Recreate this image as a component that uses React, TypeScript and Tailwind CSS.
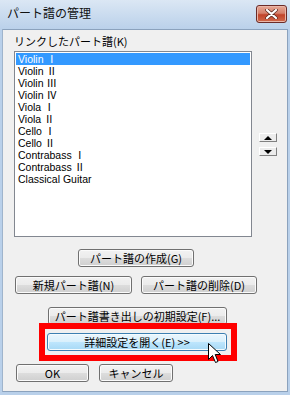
const parts = [
  'Violin Ⅰ',
  'Violin Ⅱ',
  'Violin Ⅲ',
  'Violin Ⅳ',
  'Viola Ⅰ',
  'Viola Ⅱ',
  'Cello Ⅰ',
  'Cello Ⅱ',
  'Contrabass Ⅰ',
  'Contrabass Ⅱ',
  'Classical Guitar',
];

// plain Win7 push button
const btn =
  'h-[18px] rounded-[3px] border border-[#707070] bg-[linear-gradient(#f2f2f2,#ebebeb_50%,#dddddd_50%,#cfcfcf)] shadow-[inset_0_0_0_1px_#fbfbfb] text-[11px] leading-[16px] whitespace-nowrap text-black flex items-center justify-center';

function ArrowButton({ up }: { up?: boolean }) {
  return (
    <div className="w-[18px] h-[9px] bg-[#ececec] border-t border-l border-t-white border-l-white border-b border-r border-b-[#808080] border-r-[#808080] flex items-center justify-center">
      <svg width="8" height="4" viewBox="0 0 8 4">
        {up ? <polygon points="0,4 8,4 4,0" fill="#000" /> : <polygon points="0,0 8,0 4,4" fill="#000" />}
      </svg>
    </div>
  );
}

export default function App() {
  return (
    <div className="w-[290px] h-[395px] flex flex-col bg-[linear-gradient(#dbe7f4,#b9d0ea_30px,#b9d0ea)] font-['Noto_Sans_CJK_JP',sans-serif] text-black select-none">
      {/* title bar */}
      <div className="h-[29px] flex items-start justify-between pl-[7px] pr-[3px] pt-[5px]">
        <span className="text-[12px] leading-[16px] text-[#111]">パート譜の管理</span>
        <div className="w-[31px] h-[18px] rounded-[3px] border border-[#6b2b28] bg-[linear-gradient(#e6a897,#d5806b_45%,#c2432a_55%,#cf6a4c)] shadow-[inset_0_0_0_1px_#eab6a8] flex items-center justify-center">
          <svg width="13" height="10" viewBox="0 0 13 10">
            <path d="M2 1 L11 9 M11 1 L2 9" stroke="#5a2a20" strokeWidth="3.6" strokeLinecap="round" />
            <path d="M2 1 L11 9 M11 1 L2 9" stroke="#fff" strokeWidth="2.2" strokeLinecap="round" />
          </svg>
        </div>
      </div>

      {/* client area */}
      <div className="relative flex-1 mx-[2px] mb-[3px] border border-[#8ba2bd] border-l-[#9fb4cc] bg-[#f0f0f0] flex flex-col">
        <div className="ml-[11px] mt-[3px] h-[17px] text-[11px] leading-[17px] whitespace-nowrap">リンクしたパート譜(K)</div>

        <div className="flex mt-[1px]">
          <div className="ml-[11px] w-[238px] h-[186px] bg-white border border-[#828790] p-px overflow-hidden">
            {parts.map((p, i) => (
              <div
                key={p}
                className={`h-[12px] pl-[2px] font-['Liberation_Sans','Noto_Sans_CJK_JP',sans-serif] text-[10.5px] leading-[12px] whitespace-nowrap ${
                  i === 0 ? 'bg-[#3399ff] text-white' : 'text-black'
                }`}
              >
                {p}
              </div>
            ))}
          </div>
          <div className="ml-[7px] pt-[82px] flex flex-col gap-[5px]">
            <ArrowButton up />
            <ArrowButton />
          </div>
        </div>

        <div className="flex mt-[12px] pl-[75px]">
          <div className={`${btn} w-[116px]`}>パート譜の作成(G)</div>
        </div>

        <div className="flex mt-[9px] pl-[12px] gap-[9px]">
          <div className={`${btn} w-[117px]`}>新規パート譜(N)</div>
          <div className={`${btn} w-[116px]`}>パート譜の削除(D)</div>
        </div>

        <div className="flex mt-[13px] pl-[45px]">
          <div className={`${btn} w-[179px]`}>パート譜書き出しの初期設定(F)...</div>
        </div>

        <div className="flex mt-[8px] pl-[44px]">
          <div className="w-[180px] h-[18px] rounded-[3px] border border-[#3c7fb1] bg-[linear-gradient(#eaf6fd,#d9f0fc_50%,#bee6fd_50%,#a7d9f5)] shadow-[inset_0_0_0_1px_#f4fbfe] text-[11px] leading-[16px] whitespace-nowrap flex items-center justify-center">
            詳細設定を開く(E) &gt;&gt;
          </div>
        </div>

        <div className="flex mt-[13px] pl-[13px] gap-[10px]">
          <div className={`${btn} w-[73px] border-[#3c8fd1] shadow-[inset_0_0_0_1px_#6fcdf3]`}>OK</div>
          <div className={`${btn} w-[74px]`}>キャンセル</div>
        </div>

        {/* red highlight annotation */}
        <div className="absolute left-[36px] top-[293px] w-[198px] h-[38px] border-[6px] border-[#ff0000]" />

        {/* mouse pointer */}
        <svg className="absolute left-[205px] top-[313px]" width="14" height="22" viewBox="0 0 14 22">
          <path
            d="M0.5 0.5 L0.5 16.5 L4.5 12.5 L7.5 19.5 L10 18.5 L7.2 11.5 L12.5 11.5 Z"
            fill="#fff"
            stroke="#000"
            strokeWidth="1"
            strokeLinejoin="miter"
          />
        </svg>
      </div>
    </div>
  );
}
